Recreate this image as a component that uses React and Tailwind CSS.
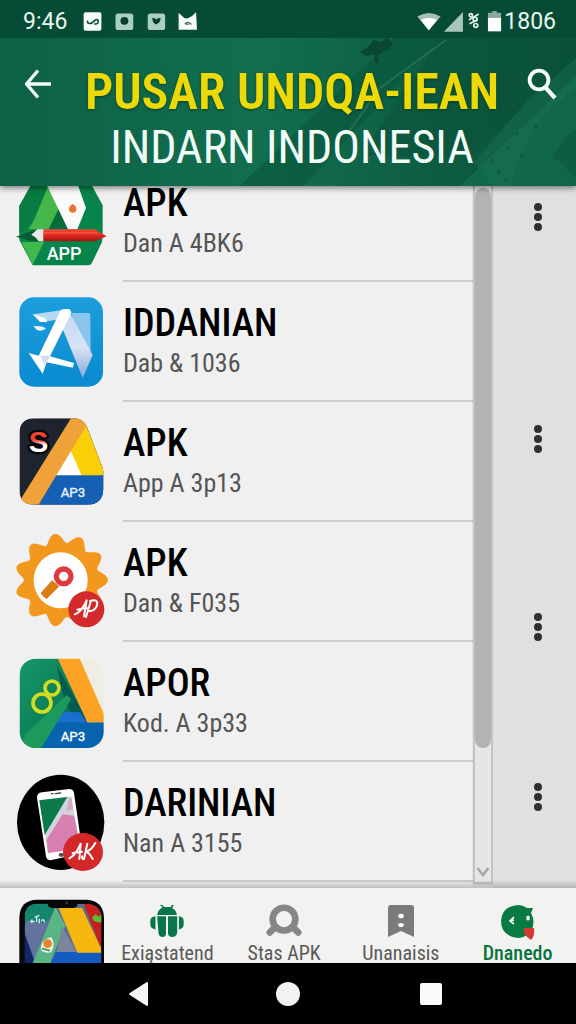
import React from "react";

const gearPath =
  Array.from({ length: 132 }, (_, i) => {
    const a = (i / 132) * Math.PI * 2;
    const r = 123 + 14 * Math.cos(11 * a);
    return `${i ? "L" : "M"}${(184 + r * Math.cos(a)).toFixed(1)} ${(165 + r * Math.sin(a)).toFixed(1)}`;
  }).join(" ") + "Z";

const iconClass = "block h-24 w-24 shrink-0";

function AppHexIcon() {
  return (
    <svg viewBox="39 -18 288 288" className={iconClass} aria-hidden="true">
      <defs>
        <linearGradient id="pencil" x1="0" y1="0" x2="0" y2="1">
          <stop offset="0" stopColor="#f04a35" />
          <stop offset="0.5" stopColor="#e0281c" />
          <stop offset="1" stopColor="#9c1712" />
        </linearGradient>
      </defs>
      <path d="M96 10 H272 L308 76 V168 L306 186 L276 248 Q272 256 264 256 H98 L58 180 V78 Z" fill="#07844a" />
      <path d="M144 18 L176 88 L146 148 H84 Q100 130 112 96 Z" fill="#45b649" />
      <path d="M96 10 H146 L110 100 Q98 130 58 160 V78 Z" fill="#087c43" />
      <path d="M176 88 L204 148 H146 Z" fill="#056b3a" />
      <path d="M64 186 H132 L98 254 Z" fill="#41b84b" />
      <path d="M138 10 H232 L258 84 L232 148 H204 Z" fill="#fafafa" />
      <path d="M218 72 Q233 80 228 94 Q218 103 208 94 Q203 80 218 72Z" fill="#e5772d" />
      <path d="M48 170 L106 150 L120 182 L96 184 Z" fill="#0b5a34" />
      <path d="M94 164 L112 148 H134 V184 H116 L106 172 Z" fill="#e9e9e6" />
      <path d="M130 148 H284 L320 169 L284 184 H130 Z" fill="url(#pencil)" />
      <path d="M130 156 H290 L300 162 H130Z" fill="#f6604a" opacity=".6" />
      <text x="140" y="239" fontSize="54" fontWeight="500" fill="#fff" className="font-['Roboto',sans-serif]">APP</text>
    </svg>
  );
}

function BlueIcon() {
  return (
    <svg viewBox="39 27 288 288" className={iconClass} aria-hidden="true">
      <defs>
        <linearGradient id="blueBg" x1="0" y1="0" x2="0" y2="1">
          <stop offset="0" stopColor="#1d9edb" />
          <stop offset="1" stopColor="#0a8ad0" />
        </linearGradient>
        <linearGradient id="fold" x1="0" y1="0" x2="0" y2="1">
          <stop offset="0" stopColor="#c3d9f1" />
          <stop offset="0.55" stopColor="#d7e2f5" />
          <stop offset="1" stopColor="#88acd8" />
        </linearGradient>
      </defs>
      <rect x="58" y="37" width="251" height="268" rx="44" fill="url(#blueBg)" />
      <path d="M214 84 L266 84 Q271 84 271 90 L272 206 L232 160 Z" fill="#8cc5ec" />
      <path d="M100 88 L182 76 L170 104 L122 112 Z" fill="#b7d9f2" />
      <path d="M98 88 L134 98 L142 112 L120 110 Z" fill="#fff" />
      <path d="M100 124 Q122 120 138 130 Q130 140 112 136 Z" fill="#e6f3fc" />
      <path d="M206 76 L278 210 L248 278 L188 132 Z" fill="url(#fold)" />
      <path d="M182 76 Q186 71 206 72 Q212 73 214 84 L150 214 L222 234 L218 248 L140 232 L128 266 L86 204 L116 212 Z" fill="#fff" />
      <path d="M120 212 L152 212 L134 240 Z" fill="#d9dcef" />
    </svg>
  );
}

function DarkIcon() {
  return (
    <svg viewBox="39 27 288 288" className={iconClass} aria-hidden="true">
      <defs>
        <clipPath id="darkClip"><path d="M104 40 H222 Q248 40 260 64 L308 188 Q312 200 310 214 V252 Q308 299 262 299 H102 Q58 299 58 252 V88 Q58 40 104 40Z" /></clipPath>
        <linearGradient id="sRed" x1="0" y1="0" x2="0" y2="1">
          <stop offset="0.45" stopColor="#ef4335" />
          <stop offset="0.6" stopColor="#fff" />
        </linearGradient>
      </defs>
      <g clipPath="url(#darkClip)">
        <rect x="58" y="38" width="254" height="264" fill="#1d242e" />
        <path d="M250 40 L320 214 H150 Z" fill="#fbcf08" />
        <path d="M210 132 L246 214 H166 Z" fill="#fff" />
        <path d="M140 211 H312 V302 H100 Z" fill="#1560b5" />
        <path d="M214 38 H262 L258 64 L114 302 H50 L70 270 Z" fill="#efa13a" />
      </g>
      <text x="86" y="142" fontSize="88" fontWeight="bold" fill="url(#sRed)" stroke="#050608" strokeWidth="14" paintOrder="stroke" strokeLinejoin="round" className="font-['Liberation_Sans',sans-serif]">S</text>
      <text x="182" y="276" fontSize="40" fill="#e9f2ff" stroke="#e9f2ff" strokeWidth="1" className="font-['Roboto',sans-serif]">AP3</text>
    </svg>
  );
}

function GearIcon() {
  return (
    <svg viewBox="39 27 288 288" className={iconClass} aria-hidden="true">
      <path d={gearPath} fill="#f3981f" stroke="#f3981f" strokeWidth="6" strokeLinejoin="round" />
      <ellipse cx="182" cy="166" rx="81" ry="84" fill="#fff" />
      <path d="M156 166 L178 184 L140 222 Q126 214 122 204 Z" fill="#d97c12" />
      <circle cx="191" cy="154" r="22" fill="#fff" stroke="#e03a40" strokeWidth="16" />
      <circle cx="259" cy="253" r="54" fill="#d32a2c" />
      <path d="M224 268 Q244 262 260 226 L252 274 M232 254 Q248 248 266 250 M272 230 L258 276 M270 228 Q298 220 290 244 Q282 260 264 258" fill="none" stroke="#fff" strokeWidth="6" strokeLinecap="round" strokeLinejoin="round" />
    </svg>
  );
}

function EightIcon() {
  return (
    <svg viewBox="39 27 288 288" className={iconClass} aria-hidden="true">
      <defs>
        <clipPath id="eightClip"><rect x="59" y="41" width="252" height="268" rx="48" /></clipPath>
        <linearGradient id="eightGreen" x1="0" y1="0" x2="1" y2="1">
          <stop offset="0" stopColor="#16976b" />
          <stop offset="1" stopColor="#066a45" />
        </linearGradient>
      </defs>
      <g clipPath="url(#eightClip)">
        <rect x="58" y="40" width="254" height="272" fill="#eeefe2" />
        <path d="M58 40 H176 L262 232 L200 312 H58Z" fill="url(#eightGreen)" />
        <path d="M170 60 L262 226 L212 204 L186 140Z" fill="#045c50" />
        <path d="M160 202 H240 L262 232 H312 V312 H100 Z" fill="#0763ae" />
        <path d="M176 202 H238 L258 232 H158Z" fill="#1a6fce" />
        <path d="M200 150 L214 162 L122 312 H56 L76 268 Z" fill="#1c9a5b" />
        <path d="M172 38 H238 L314 212 V232 H262 Z" fill="#fca326" />
      </g>
      <circle cx="156" cy="129" r="21" fill="none" stroke="#d3dc20" strokeWidth="11" />
      <circle cx="126" cy="174" r="27" fill="none" stroke="#d3dc20" strokeWidth="11" />
      <text x="182" y="287" fontSize="40" fill="#fff" stroke="#fff" strokeWidth="1" className="font-['Roboto',sans-serif]">AP3</text>
    </svg>
  );
}

function PhoneIcon() {
  return (
    <svg viewBox="39 27 288 288" className={`${iconClass} overflow-visible`} aria-hidden="true">
      <ellipse cx="182" cy="172" rx="131" ry="143" fill="#000" />
      <path d="M126 82 L208 72 Q220 72 222 84 L248 264 L152 286 Q140 286 138 274 L111 98 Q110 84 126 82Z" fill="#fff" />
      <path d="M118 106 L214 94 L242 250 L144 264 Z" fill="#d3d2df" />
      <path d="M118 106 L202 96 L134 210 Z" fill="#0b7a4b" />
      <path d="M208 100 L215 98 L218 134 L198 138 Z" fill="#d3aebd" />
      <path d="M188 148 L222 152 L242 250 L144 264 L140 224Z" fill="#d67fb0" />
      <path d="M154 86 h5 M166 86 L182 84" stroke="#444" strokeWidth="4" strokeLinecap="round" />
      <rect x="176" y="264" width="16" height="11" rx="5" fill="#555" />
      <ellipse cx="249" cy="261" rx="60" ry="57" fill="#d3282a" />
      <path d="M208 280 Q228 270 242 236 L238 282 M218 264 L246 260 M262 236 L252 282 Q246 284 246 274 M286 234 Q274 256 258 260 Q268 262 278 282" fill="none" stroke="#fff" strokeWidth="6" strokeLinecap="round" strokeLinejoin="round" />
    </svg>
  );
}

function ColorfulIcon() {
  return (
    <svg viewBox="39 24 288 225" className="block h-[75px] w-24 shrink-0" aria-hidden="true">
      <defs>
        <clipPath id="colorClip"><path d="M74 250 V110 Q76 72 112 71 H260 Q300 74 304 110 V250Z" /></clipPath>
      </defs>
      <path d="M58 250 V112 Q60 60 112 59 H260 Q310 62 312 112 V250Z" fill="#070707" />
      <g clipPath="url(#colorClip)">
        <rect x="60" y="60" width="250" height="190" fill="#5d6e95" />
        <path d="M70 60 H160 L166 90 L136 130 L76 150Z" fill="#13856a" />
        <path d="M70 140 L84 120 L140 130 L104 240Z" fill="#62749d" />
        <path d="M70 150 L106 250 H60Z" fill="#132667" />
        <path d="M166 80 L196 136 L150 250 H98 Z" fill="#57b684" />
        <path d="M186 140 L230 218 L170 216Z" fill="#7b859e" />
        <path d="M168 216 H312 V250 H152Z" fill="#155ac0" />
        <path d="M176 84 H246 L310 218 H232Z" fill="#f8b70e" />
        <path d="M246 60 H312 V200 L300 198Z" fill="#c61f20" />
      </g>
      <path d="M144 60 H232 V76 Q230 84 216 84 H158 Q144 82 144 76Z" fill="#080808" />
      <circle cx="200" cy="69" r="5" fill="#48281d" />
      <path d="M90 124 H104 M96 118 V130 M104 112 L118 106 M110 108 V126 M118 116 V130 M124 124 Q130 112 134 128" stroke="#d2eef0" strokeWidth="4" fill="none" />
      <path d="M154 172 Q168 190 154 216 Q140 222 124 212 Q118 188 144 174Z" fill="#f2efe2" />
      <circle cx="143" cy="191" r="13" fill="#e7832f" />
      <path d="M126 206 L150 212" stroke="#3f9866" strokeWidth="5" />
      <path d="M276 112 L288 102 L294 110 L304 104 V128 L282 124Z" fill="#5cbc33" />
    </svg>
  );
}

const apps = [
  { id: 1, name: "APK", detail: "Dan A 4BK6", Icon: AppHexIcon },
  { id: 2, name: "IDDANIAN", detail: "Dab & 1036", Icon: BlueIcon },
  { id: 3, name: "APK", detail: "App A 3p13", Icon: DarkIcon },
  { id: 4, name: "APK", detail: "Dan & F035", Icon: GearIcon },
  { id: 5, name: "APOR", detail: "Kod. A 3p33", Icon: EightIcon },
  { id: 6, name: "DARINIAN", detail: "Nan A 3155", Icon: PhoneIcon },
];

const menuSpacing = ["mt-[17px]", "mt-[194px]", "mt-40", "mt-[142px]"];

function StatusBar() {
  return (
    <div className="relative flex h-[38px] items-center bg-[#064b35] pr-5 pl-[23px] font-['Roboto',sans-serif] text-[23px] leading-7 text-[#eaf5f0]">
      <span className="pt-1.5">9:46</span>
      <svg viewBox="240 30 370 70" className="mt-1 ml-3 h-[23px] w-[123px]" aria-hidden="true">
        <rect x="252" y="37" width="54" height="56" rx="6" fill="#f4fbf8" />
        <path d="M264 62 Q262 74 276 70 L286 62 Q298 54 296 68 Q294 74 284 72" fill="none" stroke="#0c4d39" strokeWidth="5" />
        <rect x="349" y="41" width="54" height="50" rx="8" fill="#a9cfc1" />
        <circle cx="376" cy="63" r="12" fill="#063c2a" />
        <rect x="447" y="41" width="53" height="50" rx="8" fill="#a9cfc1" />
        <path d="M460 54 L470 56 L474 60 L478 54 L487 56 L482 68 L472 74 L464 68Z" fill="#063c2a" />
        <path d="M541 38 L558 54 L568 56 L582 48 L594 37 L597 90 H541Z" fill="#f4fbf8" />
        <path d="M560 72 Q570 62 580 74 M562 72 L572 74" fill="none" stroke="#49635a" strokeWidth="4" />
      </svg>
      <svg viewBox="363 30 264 70" className="mt-1 ml-auto h-[23px] w-[88px]" aria-hidden="true">
        <path d="M365 50 Q400 28 436 50 L400 92Z" fill="#a8bfb6" />
        <path d="M375 60 Q400 48 426 60 L400 92Z" fill="#fff" />
        <path d="M504 36 V96 H446Z" fill="#a8c5ba" />
        <g fill="none" stroke="#e4f2ed" strokeWidth="5">
          <path d="M522 60 L552 42 M524 72 L548 60" />
          <circle cx="528" cy="46" r="5" /><circle cx="541" cy="58" r="6" /><circle cx="543" cy="77" r="6" />
        </g>
        <path d="M580 38 H593 V33 H607 V38 H620 V56 H580Z" fill="#8fa69e" />
        <path d="M580 54 H620 V95 H580Z" fill="#fff" />
      </svg>
      <span className="pt-1.5">1806</span>
    </div>
  );
}

function Header() {
  return (
    <header className="relative z-10 bg-[#0d6247] shadow-[0_2px_6px_rgba(0,0,0,0.5)]">
      <StatusBar />
      <div className="relative">
        <svg viewBox="0 0 576 148" preserveAspectRatio="none" className="absolute inset-0 h-full w-full" aria-hidden="true">
          <defs>
            <linearGradient id="headerBg" x1="0" y1="0" x2="1" y2="0">
              <stop offset="0" stopColor="#0d6146" />
              <stop offset="0.45" stopColor="#126e4f" />
              <stop offset="0.75" stopColor="#0d5d43" />
              <stop offset="1" stopColor="#095238" />
            </linearGradient>
          </defs>
          <rect width="576" height="148" fill="url(#headerBg)" />
          <path d="M394 0 H440 L304 148 H240 Z" fill="#0b573d" opacity=".65" />
          <path d="M440 0 H576 V20 L470 118 H360 Z" fill="#0a5039" opacity=".45" />
          <path d="M576 38 L460 148 H576Z" fill="#116c50" opacity=".8" />
          <path d="M528 62 L474 124 L492 148 H512 Q520 90 576 50 V20Z" fill="#1b7458" opacity=".4" />
          <path d="M446 2 L380 50 L350 92" fill="none" stroke="#3b8067" strokeWidth="2" opacity=".5" />
          <path d="M360 14 l8 -5 5 -7 8 2 6 -4 6 5 -3 5 -8 5 -4 2 1 8 -5 0 1 -9 -9 2Z" fill="#0a4732" />
          <path d="M552 120 l12 -20 12 -8 v48 l-8 -6 -4 -8Z" fill="#0d5a42" opacity=".7" />
          <g fill="#0b5a40">
            <circle cx="492" cy="122" r="1.5" /><circle cx="508" cy="110" r="1.5" /><circle cx="499" cy="134" r="2" />
            <circle cx="517" cy="96" r="1.5" /><circle cx="522" cy="118" r="1.5" /><circle cx="506" cy="142" r="1.5" /><circle cx="536" cy="88" r="2" />
          </g>
        </svg>
        <div className="relative flex items-start justify-between px-5 pt-[26px] pb-3">
          <button type="button" aria-label="Back" className="mt-0.5 flex h-9 w-9 items-center justify-center">
            <svg viewBox="0 0 28 32" className="h-8 w-7" fill="none" stroke="#f3fcf8" strokeWidth="3.4" aria-hidden="true">
              <path d="M14 2.5 L2.5 16 L14 29.5 M2.5 16 H27" strokeLinejoin="round" />
            </svg>
          </button>
          <h1 className="min-w-0 flex-1 pl-1 text-center whitespace-nowrap">
            <span className="block text-[50px] leading-14 font-semibold text-[#ecd907] [text-shadow:0_1px_3px_rgba(0,50,20,0.7)]">PUSAR UNDQA-IEAN</span>
            <span className="block text-[46px] leading-[54px] font-normal text-[#f1fcf7]">INDARN INDONESIA</span>
          </h1>
          <button type="button" aria-label="Search" className="mt-0.5 -mr-1 flex h-9 w-9 items-center justify-center">
            <svg viewBox="0 0 30 32" className="h-8 w-[30px]" fill="none" stroke="#f3fcf8" strokeWidth="3.8" aria-hidden="true">
              <circle cx="12" cy="12" r="9.4" />
              <path d="M18 19 L28 30" strokeWidth="4.2" />
            </svg>
          </button>
        </div>
      </div>
    </header>
  );
}

function AppRow({ app }) {
  const { Icon } = app;
  return (
    <li className="flex h-[120px] items-stretch gap-3.5 pl-[13px]">
      <div className="flex items-center"><Icon /></div>
      <div className="flex min-w-0 flex-1 flex-col justify-center gap-2 border-b-2 border-[#cdcdce] pt-1 whitespace-nowrap">
        <h2 className="text-[38px] leading-8 font-medium text-black">{app.name}</h2>
        <p className="text-[26px] leading-8 text-[#555]">{app.detail}</p>
      </div>
    </li>
  );
}

function Scrollbar() {
  return (
    <div className="mb-1 flex w-5 shrink-0 flex-col items-center border-x-2 border-b-2 border-[#c3c3c3] bg-[#e6e6e6] shadow-[1px_0_3px_rgba(0,0,0,0.25)]" aria-hidden="true">
      <div className="mt-0.5 h-[560px] w-4 rounded-full bg-[#b3b3b3]" />
      <svg viewBox="0 0 14 12" className="mt-auto mb-1 h-3 w-3.5" fill="none" stroke="#a8a8a8" strokeWidth="2.6">
        <path d="M1.5 2 L7 9 L12.5 2" />
      </svg>
    </div>
  );
}

function AndroidIcon() {
  return (
    <svg viewBox="444 76 106 100" className="h-[34px] w-9" fill="#08754b" aria-hidden="true">
      <path d="M468 108 Q470 92 484 87 L477 79 L482 78 L489 85 H508 L512 78 L517 80 L512 88 Q524 94 526 108Z" />
      <path d="M468 112 H494 V162 Q494 173 484 173 Q474 173 472 162Z" />
      <path d="M500 112 H527 V160 Q525 173 512 173 Q501 173 500 162Z" />
      <path d="M463 112 V151 Q448 148 448 137 V124 Q449 113 463 112ZM532 112 V151 Q546 148 546 137 V124 Q545 113 532 112Z" />
    </svg>
  );
}

function StatsIcon() {
  return (
    <svg viewBox="0 0 38 34" className="h-[34px] w-9" aria-hidden="true">
      <path d="M8 25 L4 29 M30 25 L34 29" stroke="#868686" strokeWidth="7" strokeLinecap="round" />
      <circle cx="19" cy="15" r="12" fill="none" stroke="#868686" strokeWidth="7" />
    </svg>
  );
}

function BookmarkIcon() {
  return (
    <svg viewBox="0 0 36 34" className="h-[34px] w-9" aria-hidden="true">
      <path d="M8 1 H28 Q31 1 31 4 V33 L18 27 L5 33 V4 Q5 1 8 1Z" fill="#7b7b7b" />
      <ellipse cx="18" cy="12" rx="2.8" ry="2.3" fill="#fff" /><ellipse cx="18" cy="21" rx="2.8" ry="2" fill="#fff" />
    </svg>
  );
}

function BirdIcon() {
  return (
    <svg viewBox="0 0 36 36" className="h-9 w-9" aria-hidden="true">
      <path d="M18 1 Q23 1 27 4 L33 4 L31 9 Q36 18 31 27 Q26 34 18 34 Q1 32 1 17 Q2 2 18 1Z" fill="#087b43" />
      <path d="M24 24 H34 Q35 32 31 36 Q27 34 24 29Z" fill="#d23a33" />
      <path d="M14 13 L10 17 L14 20 M10 17 L14 16" fill="none" stroke="#fff" strokeWidth="1.6" />
      <ellipse cx="28" cy="14" rx="1.8" ry="2.6" fill="#fff" />
    </svg>
  );
}

const tabs = [
  { label: "Exiąstatend", Icon: AndroidIcon },
  { label: "Stas APK", Icon: StatsIcon },
  { label: "Unanaisis", Icon: BookmarkIcon },
  { label: "Dnanedo", Icon: BirdIcon, active: true },
];

function BottomNav() {
  return (
    <nav className="relative flex h-[75px] overflow-hidden bg-[#f2f2f1] pl-[13px]">
      <ColorfulIcon />
      {tabs.map(({ label, Icon, active }) => (
        <button
          key={label}
          type="button"
          aria-current={active ? "page" : undefined}
          className={`flex min-w-0 flex-1 flex-col items-center justify-start pt-4 text-[20px] leading-5 ${active ? "text-[#08733c] font-medium" : "text-[#595959]"}`}
        >
          <span className="flex h-[39px] items-start"><Icon /></span>
          <span>{label}</span>
        </button>
      ))}
    </nav>
  );
}

function SystemNav() {
  return (
    <div className="flex h-[61px] items-center justify-center gap-[115px] bg-black">
      <button type="button" aria-label="System back" className="flex w-8 justify-start">
        <svg viewBox="0 0 20 24" className="h-6 w-5" aria-hidden="true"><path d="M18 1 V23 L1 12Z" fill="#f5f5f5" stroke="#f5f5f5" strokeWidth="2" strokeLinejoin="round" /></svg>
      </button>
      <button type="button" aria-label="Home" className="h-6 w-6 rounded-full bg-[#f2f2f2]" />
      <button type="button" aria-label="Recent apps" className="flex w-8 justify-center">
        <span className="h-[22px] w-[22px] rounded-xs bg-[#fafafa]" />
      </button>
    </div>
  );
}

export default function App() {
  return (
    <div className="flex min-h-screen flex-col bg-[#f0f0f0] font-['Roboto_Condensed','Liberation_Sans',sans-serif]">
      <Header />
      <main className="relative flex flex-1 overflow-hidden">
        <ul className="-mt-6 min-w-0 flex-1">
          {apps.map((app) => <AppRow key={app.id} app={app} />)}
        </ul>
        <Scrollbar />
        <div className="flex w-[83px] shrink-0 flex-col items-center bg-[#e1e0df] pl-1.5">
          {menuSpacing.map((spacing, i) => (
            <button key={spacing} type="button" aria-label={`More options ${i + 1}`} className={`flex h-7 w-6 flex-col items-center justify-between ${spacing}`}>
              <span className="h-2 w-2 rounded-full bg-[#303030]" />
              <span className="h-2 w-2 rounded-full bg-[#303030]" />
              <span className="h-2 w-2 rounded-full bg-[#303030]" />
            </button>
          ))}
        </div>
        <div className="pointer-events-none absolute inset-x-0 bottom-0 h-2 bg-linear-to-b from-transparent to-black/20" />
      </main>
      <BottomNav />
      <SystemNav />
    </div>
  );
}
